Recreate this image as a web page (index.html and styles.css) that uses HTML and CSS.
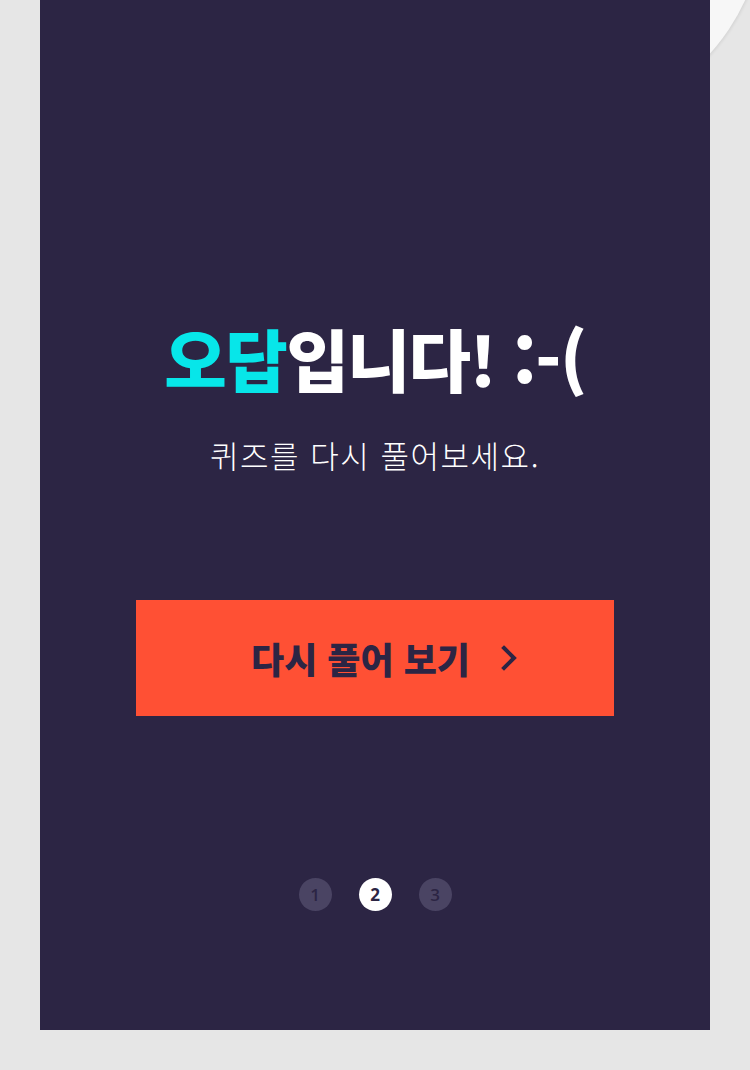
FILE: index.html
```html
<!DOCTYPE html>
<html lang="ko">
<head>
<meta charset="utf-8">
<link rel="stylesheet" href="styles.css">
</head>
<body>
<div class="page">
  <div class="curl"></div>
  <main class="panel">
    <h1 class="title"><span class="accent">오답</span>입니다! :-(</h1>
    <p class="subtitle">퀴즈를 다시 풀어보세요.</p>
    <button class="retry" type="button">
      <span class="retry-label">다시 풀어 보기</span>
      <svg class="chev" width="16" height="26" viewBox="0 0 16 26"><path d="M3 3 L13 13 L3 23" fill="none" stroke="#2c2544" stroke-width="4" stroke-linecap="square"/></svg>
    </button>
    <nav class="pager">
      <span class="dot">1</span>
      <span class="dot active">2</span>
      <span class="dot">3</span>
    </nav>
  </main>
</div>
</body>
</html>
```
FILE: styles.css
```css
html, body {
  margin: 0;
  padding: 0;
  background: #e6e6e6;
  overflow: hidden;
}
.page {
  position: relative;
  width: 750px;
  height: 1070px;
}
.curl {
  position: absolute;
  left: 335px;
  top: -305px;
  width: 430px;
  height: 430px;
  border-radius: 50%;
  background: #f7f7f7;
  box-shadow: 1px 1px 3px rgba(0,0,0,0.08);
  z-index: 0;
}
.panel {
  position: relative;
  z-index: 1;
  margin-left: 40px;
  width: 670px;
  height: 1030px;
  background: #2c2544;
  display: flex;
  flex-direction: column;
  align-items: center;
  padding-top: 318px;
  box-sizing: border-box;
  font-family: "Noto Sans CJK KR", "Noto Sans", sans-serif;
}
.title {
  margin: 0;
  font-size: 68px;
  line-height: 80px;
  font-weight: 900;
  color: #ffffff;
  letter-spacing: -1.5px;
  white-space: nowrap;
}
.accent {
  color: #07e6e9;
}
.subtitle {
  margin: 37px 0 0;
  font-size: 31px;
  line-height: 40px;
  font-weight: 200;
  color: #ffffff;
  letter-spacing: 1.5px;
}
.retry {
  margin-top: 125px;
  width: 478px;
  height: 116px;
  border: 0;
  background: #ff5034;
  display: flex;
  align-items: center;
  justify-content: center;
  gap: 31px;
  padding: 0 0 0 18px;
  font-family: inherit;
  cursor: pointer;
}
.retry-label {
  font-size: 36px;
  font-weight: 900;
  color: #2c2544;
  letter-spacing: 0;
}
.chev {
  display: block;
}
.pager {
  margin-top: 162px;
  display: flex;
  gap: 27px;
}
.dot {
  width: 33px;
  height: 33px;
  border-radius: 50%;
  background: #4a4463;
  color: #2c2544;
  display: flex;
  align-items: center;
  justify-content: center;
  font-family: "Open Sans", sans-serif;
  font-size: 17px;
  font-weight: 600;
}
.dot.active {
  background: #ffffff;
  color: #2c2544;
  font-weight: 700;
}
```
